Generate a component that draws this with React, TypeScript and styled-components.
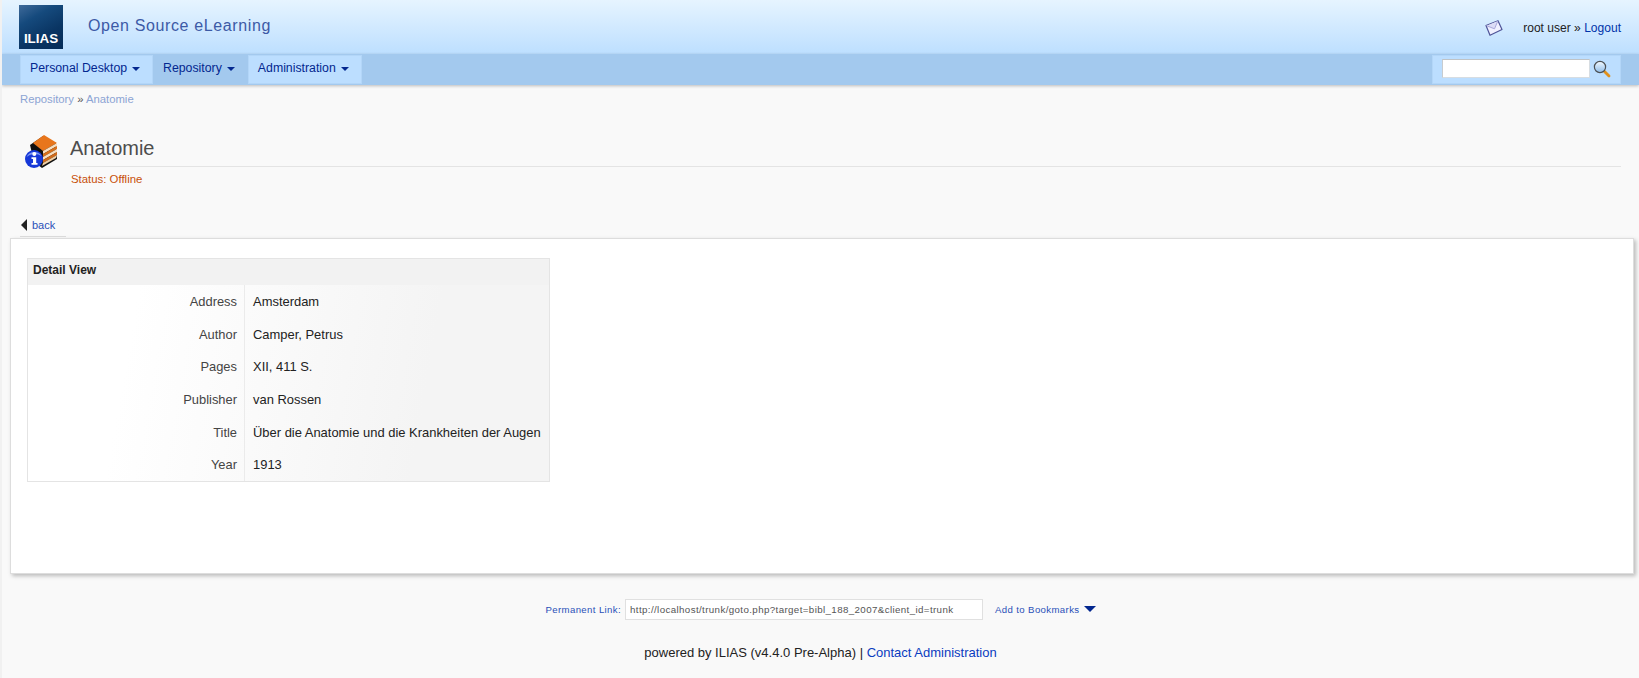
import React from 'react';
import styled, { createGlobalStyle } from 'styled-components';

const GlobalStyle = createGlobalStyle`
  html, body {
    margin: 0;
    padding: 0;
    background: #f9f9f9;
    font-family: "Liberation Sans", Arial, sans-serif;
    color: #222;
  }
  a {
    text-decoration: none;
    color: #03a;
  }
`;

const Page = styled.div`
  min-height: 678px;
  display: flex;
  flex-direction: column;
  border-left: 2px solid #f1f1f1;
  box-sizing: border-box;
  overflow: hidden;
`;

const TopBar = styled.header`
  height: 54px;
  box-sizing: border-box;
  display: flex;
  align-items: center;
  padding: 5px 18px 5px 17px;
  background: linear-gradient(#e6f4ff, #bddfff);
`;

const Logo = styled.div`
  width: 44px;
  height: 44px;
  display: flex;
  align-items: flex-end;
  justify-content: center;
  padding-bottom: 3px;
  box-sizing: border-box;
  background: linear-gradient(150deg, #3f6a9a 0%, #154a7d 30%, #0a3563 65%, #052c58 100%);
  color: #fff;
  font-size: 13.4px;
  font-weight: bold;
  line-height: 14px;
`;

const Tagline = styled.div`
  margin-left: 25px;
  margin-top: -2px;
  font-size: 16px;
  letter-spacing: 0.62px;
  color: #3c5aa6;
`;

const UserArea = styled.div`
  margin-left: auto;
  display: flex;
  align-items: center;
  font-size: 12.05px;
  margin-top: 2px;
  color: #222;
`;

const MailIcon = styled.svg`
  width: 18px;
  height: 16px;
  margin-right: 20px;
`;

const NavBar = styled.nav`
  height: 31px;
  box-sizing: border-box;
  display: flex;
  justify-content: space-between;
  padding: 1px 18px 1px 18px;
  background: #a3c9ee;
  box-shadow: 0 1px 3px rgba(0, 0, 0, 0.25);
`;

const Tabs = styled.div`
  display: flex;
`;

const Tab = styled.a<{ $active?: boolean }>`
  display: flex;
  align-items: center;
  gap: 4px;
  padding: 0 13px 3px 10px;
  height: 29px;
  box-sizing: border-box;
  font-size: 12.3px;
  color: #03278f;
  background: ${(p) => (p.$active ? '#bcdeff' : 'transparent')};
  box-shadow: ${(p) => (p.$active ? 'inset 0 0 0 1px #b3d6f8' : 'none')};
`;

const Caret = styled.span`
  width: 0;
  height: 0;
  margin-left: 1px;
  margin-top: 1px;
  border-left: 4px solid transparent;
  border-right: 4px solid transparent;
  border-top: 4px solid #03278f;
`;

const SearchBox = styled.div`
  width: 189px;
  height: 29px;
  box-sizing: border-box;
  display: flex;
  align-items: center;
  gap: 3px;
  padding: 0 10px 2px;
  background: #bcdeff;
  box-shadow: inset 0 0 0 1px #b3d6f8;
`;

const SearchInput = styled.div`
  width: 148px;
  height: 19px;
  box-sizing: border-box;
  background: #fff;
  border: 1px solid #d7dde2;
  border-top-color: #bfc3c6;
  border-left-color: #c8cccf;
`;

const Breadcrumb = styled.div`
  padding: 7px 0 0 18px;
  height: 14px;
  font-size: 11.3px;
  line-height: 14px;
  color: #555;
  a {
    color: #8ca4d4;
  }
`;

const TitleRow = styled.div`
  display: flex;
  margin-top: 30px;
  padding: 0 18px 0 21px;
`;

const BookIcon = styled.svg`
  width: 36px;
  height: 36px;
  flex: none;
  margin-top: -2px;
`;

const TitleBlock = styled.div`
  flex: 1;
  margin-left: 11px;
`;

const Title = styled.h1`
  margin: 0;
  padding: 0 0 5px 0;
  font-size: 20px;
  font-weight: normal;
  line-height: 25px;
  color: #4d4d4d;
  border-bottom: 1px solid #e4e4e4;
`;

const Status = styled.div`
  margin: 5px 0 0 1px;
  font-size: 11.4px;
  line-height: 14px;
  color: #c8500a;
`;

const BackRow = styled.div`
  margin: 29px 0 0 18px;
  width: 46px;
  height: 22px;
  box-sizing: border-box;
  display: flex;
  align-items: center;
  gap: 5px;
  padding: 0 0 1px 1px;
  font-size: 11px;
  border-bottom: 1px solid #ddd;
  a {
    color: #2a50b8;
  }
`;

const BackArrow = styled.span`
  width: 0;
  height: 0;
  border-top: 6px solid transparent;
  border-bottom: 6px solid transparent;
  border-right: 6px solid #222;
`;

const Panel = styled.main`
  margin: 1px 5px 0 8px;
  height: 336px;
  box-sizing: border-box;
  padding: 19px 16px;
  background: #fff;
  border: 1px solid #ddd;
  box-shadow: 2px 2px 4px rgba(0, 0, 0, 0.25);
`;

const DetailTable = styled.div`
  width: 523px;
  box-sizing: border-box;
  border: 1px solid #e4e4e4;
`;

const TableHead = styled.div`
  height: 26px;
  box-sizing: border-box;
  padding-left: 5px;
  font-size: 12px;
  font-weight: bold;
  line-height: 22px;
  color: #222;
  background: #f2f2f2;
`;

const Rows = styled.div`
  display: grid;
  grid-template-columns: 217px 1fr;
  grid-auto-rows: 32.7px;
  background: linear-gradient(100deg, #fff 20%, #f4f4f4 75%);
`;

const Label = styled.div`
  display: flex;
  align-items: center;
  justify-content: flex-end;
  padding-right: 7px;
  font-size: 12.9px;
  color: #444;
  border-right: 1px solid #ebebeb;
`;

const Value = styled.div`
  display: flex;
  align-items: center;
  padding-left: 8px;
  font-size: 12.95px;
  color: #222;
`;

const LinkRow = styled.div`
  margin-top: 25px;
  display: flex;
  align-items: center;
  justify-content: center;
  font-size: 9.6px;
  letter-spacing: 0.38px;
  color: #2a50b8;
`;

const LinkInput = styled.div`
  width: 358px;
  height: 21px;
  box-sizing: border-box;
  margin: 0 12px 0 4px;
  padding-left: 4px;
  line-height: 19px;
  font-size: 9.75px;
  color: #555;
  background: #fff;
  border: 1px solid #e0e0e0;
`;

const BookmarkCaret = styled.span`
  width: 0;
  height: 0;
  margin: 0 0 1px 4px;
  border-left: 6px solid transparent;
  border-right: 6px solid transparent;
  border-top: 6px solid #03278f;
`;

const Footer = styled.footer`
  margin-top: 25px;
  text-align: center;
  font-size: 13px;
  line-height: 15px;
  color: #222;
  a {
    color: #0a3cc0;
  }
`;

const details: [string, string][] = [
  ['Address', 'Amsterdam'],
  ['Author', 'Camper, Petrus'],
  ['Pages', 'XII, 411 S.'],
  ['Publisher', 'van Rossen'],
  ['Title', 'Über die Anatomie und die Krankheiten der Augen'],
  ['Year', '1913'],
];

export default function App() {
  return (
    <>
      <GlobalStyle />
      <Page>
        <TopBar>
          <Logo>ILIAS</Logo>
          <Tagline>Open Source eLearning</Tagline>
          <UserArea>
            <MailIcon viewBox="0 0 18 16">
              <path d="M1 5.5 L13 0.7 L17 9.5 L5 15.3 Z" fill="#f0f0ff" stroke="#4f5498" strokeWidth="1.2" strokeLinejoin="round" />
              <path d="M1.5 5.7 L9.5 8.8 L12.8 1" fill="#dcdcf6" stroke="#a8a8dc" strokeWidth="1" />
            </MailIcon>
            <span>root user » <a href="#">Logout</a></span>
          </UserArea>
        </TopBar>
        <NavBar>
          <Tabs>
            <Tab $active href="#">Personal Desktop <Caret /></Tab>
            <Tab href="#">Repository <Caret /></Tab>
            <Tab $active href="#">Administration <Caret /></Tab>
          </Tabs>
          <SearchBox>
            <SearchInput />
            <svg width="18" height="18" viewBox="0 0 18 18">
              <defs>
                <linearGradient id="glass" x1="0" y1="0" x2="0" y2="1">
                  <stop offset="0" stopColor="#f2f9ff" />
                  <stop offset="1" stopColor="#8fbdea" />
                </linearGradient>
              </defs>
              <path d="M11 11 L16 16" stroke="#e0901c" strokeWidth="2.8" strokeLinecap="round" />
              <circle cx="7" cy="7" r="5.6" fill="url(#glass)" stroke="#4c5054" strokeWidth="1.2" />
            </svg>
          </SearchBox>
        </NavBar>
        <Breadcrumb>
          <a href="#">Repository</a> » <a href="#">Anatomie</a>
        </Breadcrumb>
        <TitleRow>
          <BookIcon viewBox="0 0 36 36">
            <path d="M7 11 L20 2 L33 9 L34 25 L19 34 L11 28 Z" fill="#101010" />
            <path d="M10 9 L21 1 L34 9 L20 17 Z" fill="#e8761c" />
            <path d="M20 17 L34 9 L34 12 L20 20 Z" fill="#f8dfc0" />
            <path d="M20 20 L34 12 L34 15 L20 23 Z" fill="#d9701a" />
            <path d="M20 23 L34 15 L34 18 L20 26 Z" fill="#f8dfc0" />
            <path d="M20 26 L34 18 L34 21 L20 29 Z" fill="#d06a1a" />
            <path d="M20 29 L34 21 L33 24 L19 32 Z" fill="#f0cfa4" />
            <circle cx="11" cy="25" r="9" fill="#1638d8" />
            <path d="M3.5 23 A8.5 8.5 0 0 1 18.5 22 A11 9 0 0 0 3.5 23 Z" fill="#7d97f2" />
            <circle cx="11.3" cy="20" r="2" fill="#fff" />
            <path d="M8.5 23.2 L13.2 23.2 L13.2 29 L14.5 29 L14.5 30.8 L8.5 30.8 L8.5 29 L10 29 L10 25 L8.5 25 Z" fill="#fff" />
          </BookIcon>
          <TitleBlock>
            <Title>Anatomie</Title>
            <Status>Status: Offline</Status>
          </TitleBlock>
        </TitleRow>
        <BackRow>
          <BackArrow />
          <a href="#">back</a>
        </BackRow>
        <Panel>
          <DetailTable>
            <TableHead>Detail View</TableHead>
            <Rows>
              {details.map(([label, value]) => (
                <React.Fragment key={label}>
                  <Label>{label}</Label>
                  <Value>{value}</Value>
                </React.Fragment>
              ))}
            </Rows>
          </DetailTable>
        </Panel>
        <LinkRow>
          Permanent Link:
          <LinkInput>http://localhost/trunk/goto.php?target=bibl_188_2007&amp;client_id=trunk</LinkInput>
          Add to Bookmarks
          <BookmarkCaret />
        </LinkRow>
        <Footer>
          powered by ILIAS (v4.4.0 Pre-Alpha) | <a href="#">Contact Administration</a>
        </Footer>
      </Page>
    </>
  );
}
